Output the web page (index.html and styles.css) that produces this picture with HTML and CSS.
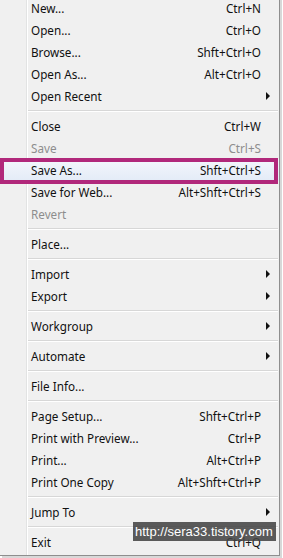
FILE: index.html
```html
<!DOCTYPE html>
<html lang="en">
<head>
  <meta charset="UTF-8">
  <title>File Menu</title>
  <meta name="viewport" content="width=device-width, initial-scale=1">
  <link rel="stylesheet" href="styles.css">
</head>
<body>
  <div class="menu">
    <div class="item"><span>New...</span><span class="key">Ctrl+N</span></div>
    <div class="item"><span>Open...</span><span class="key">Ctrl+O</span></div>
    <div class="item"><span>Browse...</span><span class="key">Shft+Ctrl+O</span></div>
    <div class="item"><span>Open As...</span><span class="key">Alt+Ctrl+O</span></div>
    <div class="item"><span>Open Recent</span><span class="key"></span><span class="sub"></span></div>
    <div class="sep"></div>
    <div class="item"><span>Close</span><span class="key">Ctrl+W</span></div>
    <div class="item off"><span>Save</span><span class="key">Ctrl+S</span></div>
    <div class="item marked"><span>Save As...</span><span class="key">Shft+Ctrl+S</span></div>
    <div class="item"><span>Save for Web...</span><span class="key">Alt+Shft+Ctrl+S</span></div>
    <div class="item off"><span>Revert</span><span class="key"></span></div>
    <div class="sep"></div>
    <div class="item"><span>Place...</span><span class="key"></span></div>
    <div class="sep"></div>
    <div class="item"><span>Import</span><span class="key"></span><span class="sub"></span></div>
    <div class="item"><span>Export</span><span class="key"></span><span class="sub"></span></div>
    <div class="sep"></div>
    <div class="item"><span>Workgroup</span><span class="key"></span><span class="sub"></span></div>
    <div class="sep"></div>
    <div class="item"><span>Automate</span><span class="key"></span><span class="sub"></span></div>
    <div class="sep"></div>
    <div class="item"><span>File Info...</span><span class="key"></span></div>
    <div class="sep"></div>
    <div class="item"><span>Page Setup...</span><span class="key">Shft+Ctrl+P</span></div>
    <div class="item"><span>Print with Preview...</span><span class="key">Ctrl+P</span></div>
    <div class="item"><span>Print...</span><span class="key">Alt+Ctrl+P</span></div>
    <div class="item"><span>Print One Copy</span><span class="key">Alt+Shft+Ctrl+P</span></div>
    <div class="sep"></div>
    <div class="item"><span>Jump To</span><span class="key"></span><span class="sub"></span></div>
    <div class="sep"></div>
    <div class="item"><span>Exit</span><span class="key">Ctrl+Q</span></div>
  </div>
  <div class="watermark">http://sera33.tistory.com</div>
</body>
</html>
```

FILE: styles.css
```css
body {
  margin: 0;
  background: #ffffff;
  font-family: "Noto Sans", "Liberation Sans", sans-serif;
  font-size: 11.7px;
  color: #111;
  position: relative;
  height: 558px;
  overflow: hidden;
}
.menu {
  width: 279px;
  margin-top: -3px;
  background-color: #f0f0f0;
  background-image: linear-gradient(to right, transparent 26px, #e2e3e3 26px, #e2e3e3 27px, #fff 27px, #fff 28px, transparent 28px);
  border-right: 1px solid #8e8e8e;
  border-bottom: 1px solid #8e8e8e;
  padding-bottom: 2px;
  box-shadow: 2px 2px 0 #d8d8d8;
}
.item {
  display: grid;
  grid-template-columns: 1fr auto 18px;
  align-items: center;
  height: 22px;
  padding-left: 31px;
  position: relative;
}
.item.off {
  color: #8d8d8d;
}
.key {
  text-align: right;
}
.sub {
  width: 0;
  height: 0;
  margin-left: 5px;
  border-left: 4px solid #111;
  border-top: 4px solid transparent;
  border-bottom: 4px solid transparent;
}
.sep {
  height: 8px;
  display: flex;
  align-items: center;
  padding-left: 28px;
  padding-right: 1px;
}
.sep::before {
  content: "";
  flex: 1;
  height: 1px;
  background: #d7d7d7;
  border-bottom: 1px solid #fff;
}
.marked {
  background: linear-gradient(to bottom, #f4f7fc, #e3ebf7);
}
.marked::after {
  content: "";
  position: absolute;
  top: -1px;
  bottom: -3px;
  left: 0;
  right: 1px;
  border: 4px solid #b1287b;
}
.watermark {
  position: absolute;
  left: 133px;
  top: 522px;
  width: 141px;
  height: 19px;
  line-height: 19px;
  padding-left: 2px;
  background: rgba(68, 68, 68, 0.88);
  color: #fff;
  font-family: "Liberation Sans", sans-serif;
  font-size: 13px;
  white-space: nowrap;
  overflow: hidden;
}
```
